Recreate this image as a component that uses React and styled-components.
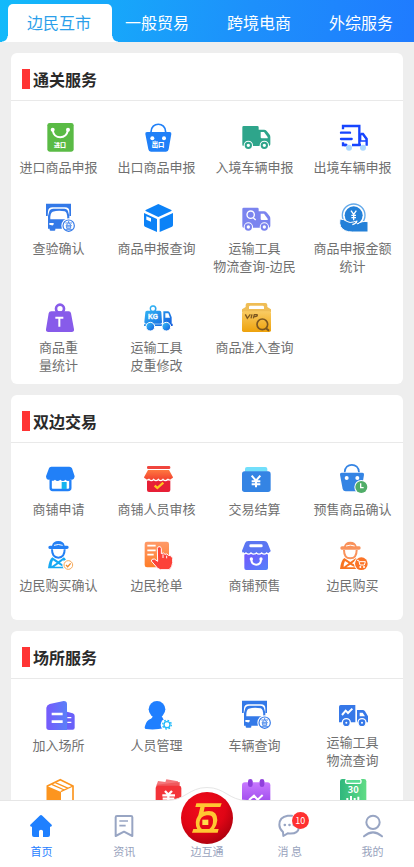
import React from 'react';
import styled, { createGlobalStyle } from 'styled-components';

const GlobalStyle = createGlobalStyle`
  * { box-sizing: border-box; }
  body {
    margin: 0;
    background: #eeeeee;
    font-family: "Noto Sans CJK SC", "Noto Sans", sans-serif;
  }
  button { font-family: inherit; border: 0; padding: 0; margin: 0; background: none; cursor: pointer; }
`;

const Screen = styled.div`
  display: flex;
  flex-direction: column;
  height: 100vh;
  overflow: hidden;
`;

const Tabs = styled.header`
  display: flex;
  flex: none;
  height: 42px;
  padding: 4px 0 0 8px;
  background: linear-gradient(100deg, #12bafa 0%, #1d90fb 60%, #1f7bff 100%);
`;

const TabRest = styled.div`
  display: flex;
  flex: 1;
  justify-content: space-between;
  padding: 0 21px 0 13px;
`;

const Tab = styled.button`
  padding-bottom: 2px;
  font-size: 16px;
  line-height: 36px;
  color: #fff;
  white-space: nowrap;
`;

const ActiveTab = styled(Tab)`
  position: relative;
  width: 104px;
  padding-right: 2px;
  color: #2b9fea;
  background: #fff;
  border-radius: 5px 5px 0 0;
  &::before, &::after {
    content: "";
    position: absolute;
    bottom: 0;
    width: 6px;
    height: 6px;
  }
  &::before { right: 100%; background: radial-gradient(circle at 0 0, transparent 5px, #fff 6px); }
  &::after { left: 100%; background: radial-gradient(circle at 100% 0, transparent 5px, #fff 6px); }
`;

const Main = styled.main`
  display: flex;
  flex: 1;
  flex-direction: column;
  gap: 11px;
  min-height: 0;
  padding: 11px 11px 0;
  overflow-y: auto;
  scrollbar-width: none;
`;

const Card = styled.section`
  flex: none;
  background: #fff;
  border-radius: 6px;
`;

const CardHead = styled.div`
  display: flex;
  align-items: center;
  gap: 3px;
  height: 48px;
  padding: 4px 11px 0;
  border-bottom: 1px solid #e9e9e9;
`;

const Mark = styled.span`
  width: 8px;
  height: 20px;
  background: #ff3434;
`;

const Title = styled.h2`
  margin: 0;
  font-size: 16px;
  line-height: 24px;
  font-weight: 700;
  color: #2a2a2a;
`;

const Grid = styled.div`
  display: grid;
  grid-template-columns: repeat(4, 1fr);
  row-gap: ${(p) => p.$gap}px;
  padding: 22px 0 ${(p) => p.$bottom}px;
`;

const Item = styled.button`
  display: flex;
  flex-direction: column;
  align-items: center;
  justify-content: flex-start;
  gap: ${(p) => (p.$tight ? 2 : 5)}px;
`;

const Glyph = styled.svg`
  display: block;
  width: 30px;
  height: 30px;
  overflow: visible;
`;

const Label = styled.span`
  padding-right: 3px;
  font-size: 13px;
  line-height: 18px;
  color: #707070;
  white-space: pre;
  text-align: center;
`;

const Nav = styled.nav`
  position: relative;
  display: grid;
  flex: none;
  grid-template-columns: repeat(5, 1fr);
  height: 67px;
  background: #fff;
  border-top: 1px solid #e6e6e6;
`;

const Hump = styled.svg`
  position: absolute;
  left: 50%;
  top: -15px;
  width: 80px;
  height: 16px;
  margin-left: -40px;
`;

const NavItem = styled.button`
  position: relative;
  display: flex;
  flex-direction: column;
  align-items: center;
  justify-content: flex-end;
  gap: 4px;
  padding-bottom: 8px;
  font-size: 11px;
  line-height: 16px;
  color: ${(p) => (p.$active ? '#1f80ff' : '#98a3bd')};
`;

const NavIcon = styled.svg`
  display: block;
  width: 26px;
  height: 26px;
`;

const Emblem = styled.svg`
  position: absolute;
  left: 50%;
  top: -9px;
  width: 52px;
  height: 52px;
  margin-left: -26px;
`;

const Badge = styled.span`
  position: absolute;
  left: 50%;
  top: 11px;
  width: 17px;
  height: 17px;
  margin-left: 2px;
  border-radius: 50%;
  background: #ff3030;
  color: #fff;
  font-size: 9px;
  line-height: 17px;
  text-align: center;
`;

const Bus = () => (
  <g>
    <path d="M3 -1H78V36H73V22Q73 10 60 10H23Q10 10 9 22L8 36H3Z" fill="#3379e8" />
    <path d="M9 68V36L13 22Q15 14 25 14H58Q67 14 69 22L73 36V74H31V77Q31 80 28 80H17Q14 80 14 77V74H9Z" fill="#3379e8" />
    <path d="M16 46Q15 27 23 23Q40 18 59 22Q67 24 67 46Z" fill="#fff" />
    <path d="M13 57H26V61Q25 65 20 64L13 62Z" fill="#fff" />
    <circle cx="71" cy="65" r="22" fill="#fff" />
    <circle cx="71" cy="65" r="17" fill="#fff" stroke="#3379e8" strokeWidth="3.5" />
    <path d="M61 57H81M71 51V57M70 58L62 65M72 58L80 65M65 64H77V73H65ZM65 68.5H77M61 77H81" fill="none" stroke="#3379e8" strokeWidth="2.5" />
  </g>
);

const Truck = ({ color, y = 0 }) => (
  <g transform={`translate(0 ${y})`}>
    <path d="M8 9H49Q53 9 53 13V20H70Q75 20 79 26L86 35Q88 38 88 42V64Q88 69 83 69H8Q4 69 4 65V13Q4 9 8 9Z" fill={color} />
    <path d="M59 27H69L80 42V46H62Q59 46 59 43Z" fill="#fff" />
    <circle cx="22" cy="67" r="14" fill="#fff" /><circle cx="70" cy="67" r="14" fill="#fff" />
    <circle cx="22" cy="67" r="8" fill="none" stroke={color} strokeWidth="6" />
    <circle cx="70" cy="67" r="8" fill="none" stroke={color} strokeWidth="6" />
  </g>
);

const Farmer = ({ a, b }) => (
  <g>
    <path d="M21 14Q24 0 40 0Q56 0 59 14H67Q71 14 71 19Q71 24 66 24H14Q10 24 10 19Q10 14 15 14Z" fill={a} />
    <path d="M27 13Q40 8 53 13" fill="none" stroke="#fff" strokeWidth="3" />
    <path d="M21 25Q21 50 40 50Q59 50 59 25" fill="none" stroke={a} strokeWidth="6" />
    <path d="M22 49Q12 56 9 82H64Q70 59 57 49L40 61ZM24 58L35 65L20 76Q20 65 24 58ZM40 69L54 77H28ZM55 57L61 74L45 65Z" fill={b} fillRule="evenodd" />
  </g>
);

const icons = {
  importBag: (
    <g>
      <rect x="7" y="0" width="79" height="86" rx="7" fill="#5abb45" />
      <path d="M23 22Q27 43 46 43Q64 43 69 22" fill="none" stroke="#fff" strokeWidth="6" />
      <circle cx="23" cy="20" r="6" fill="#fff" /><circle cx="69" cy="20" r="6" fill="#fff" />
      <text x="45" y="71" fontSize="18" fontWeight="900" fill="#fff" textAnchor="middle">进口</text>
    </g>
  ),
  exportBag: (
    <g fill="#2080f8">
      <path d="M24 27C24 -4 68 -4 68 27" fill="none" stroke="#2080f8" strokeWidth="5" />
      <path d="M12 27H80Q86 27 85 33L77 79Q76 86 69 86H24Q17 86 16 79L7 33Q6 27 12 27Z" />
      <circle cx="28" cy="46" r="6" fill="#fff" /><circle cx="63" cy="46" r="6" fill="#fff" />
      <text x="45" y="71" fontSize="19" fontWeight="900" fill="#fff" textAnchor="middle">出口</text>
    </g>
  ),
  truckIn: <Truck color="#2ea58b" />,
  truckOut: (
    <g fill="none" stroke="#1745ff" strokeWidth="7">
      <path d="M12 19V9H61V66H39M12 58V66H22M61 66H66M65 33H72L83 48V68" />
      <path d="M6 29H33M6 48H38M16 66H22" strokeLinecap="round" />
      <path d="M65 34H72L82 48V54H65Z" strokeWidth="4" />
      <circle cx="30" cy="74" r="9" fill="#acd8ff" stroke="none" /><circle cx="72" cy="74" r="9" fill="#acd8ff" stroke="none" />
    </g>
  ),
  bus: <Bus />,
  cube: (
    <g fill="#0c82f7">
      <path d="M46 0L85 18Q87 20 85 21L46 39L8 21Q6 20 8 18Z" />
      <path d="M3 27L42 45V84L6 68Q3 67 3 63ZM90 27L50 45V84L87 68Q90 67 90 63Z" />
      <path d="M10 37L24 43V53L10 47Z" fill="#fff" />
    </g>
  ),
  truckSearch: (
    <g>
      <Truck color="#7b84ef" y={2} />
      <circle cx="29" cy="32" r="11" fill="none" stroke="#fff" strokeWidth="4" />
      <path d="M37 41L44 48" stroke="#fff" strokeWidth="4" />
    </g>
  ),
  coinHand: (
    <g fill="#2380d8">
      <circle cx="44" cy="34" r="34" fill="none" stroke="#64aaea" strokeWidth="4" />
      <circle cx="44" cy="34" r="27" />
      <path d="M36 20L44 31L52 20M44 31V49M37 34H51M37 41H51" fill="none" stroke="#fff" strokeWidth="4" />
      <path d="M3 45Q14 45 23 52Q34 58 43 54L49 52L56 60Q67 50 87 53V84H40Q14 84 5 68Q0 58 3 45Z" stroke="#fff" strokeWidth="3" />
      <path d="M40 62Q52 58 54 50" fill="none" stroke="#fff" strokeWidth="4" />
    </g>
  ),
  weight: (
    <g fill="#875bea">
      <circle cx="45" cy="17" r="12" fill="none" stroke="#875bea" strokeWidth="8" />
      <path d="M19 25H71Q77 25 78 31L87 79Q88 87 80 87H10Q2 87 3 79L11 31Q12 25 19 25Z" />
      <path d="M31 44H55M43 44V71" stroke="#fff" strokeWidth="6" fill="none" />
    </g>
  ),
  truckKg: (
    <g>
      <linearGradient id="kg" x2="1" y2="1"><stop stopColor="#38c3f8" /><stop offset="1" stopColor="#1059dc" /></linearGradient>
      <g fill="url(#kg)">
        <path d="M22 23C11 1 49 1 39 23H50Q55 23 55 28L57 58Q57 62 53 62H9Q4 62 4 57L7 28Q7 23 12 23ZM30 11A6 6 0 1 0 30 23A6 6 0 1 0 30 11ZM61 25H75Q79 25 81 30L86 43V62H89V69H3V64H61ZM67 31V44H81L76 31Z" fillRule="evenodd" />
        <circle cx="22" cy="71" r="13" stroke="#fff" strokeWidth="3" /><circle cx="70" cy="71" r="13" stroke="#fff" strokeWidth="3" />
      </g>
      <text x="30" y="48" fontSize="20" fontWeight="900" fill="#fff" stroke="#fff" textAnchor="middle" fontFamily="Liberation Sans">KG</text>
    </g>
  ),
  vip: (
    <g>
      <linearGradient id="vip" x2="0" y2="1"><stop stopColor="#f9cb63" /><stop offset="1" stopColor="#eea20c" /></linearGradient>
      <path d="M20 0H73Q79 0 79 6V12L90 19V27H3V19L14 12V6Q14 0 20 0ZM28 8Q24 8 24 12V18H69V12Q69 8 65 8Z" fill="#efbd55" fillRule="evenodd" />
      <rect x="3" y="25" width="87" height="62" rx="5" fill="url(#vip)" />
      <path d="M13 34L19 46L28 34M33 34L30 46M37 46L40 35H48Q51 40 42 41H39" fill="none" stroke="#7c5620" strokeWidth="4" />
      <circle cx="64" cy="64" r="16" fill="none" stroke="#7c5620" strokeWidth="5" />
      <path d="M75 76L84 83" stroke="#7c5620" strokeWidth="6" />
    </g>
  ),
  shop: (
    <g>
      <path d="M17 44V69Q17 75 23 75H69Q76 75 76 69V44" fill="#fff" stroke="#2180f8" strokeWidth="7" />
      <rect x="50" y="51" width="15" height="21" fill="#15b4ee" />
      <path d="M19 5H73Q79 5 81 10L89 34Q87 47 76 44Q70 52 61 44Q54 52 46 44Q37 52 30 44Q21 51 15 44Q4 47 3 34L12 10Q13 5 19 5Z" fill="#2180f8" />
    </g>
  ),
  shopCheck: (
    <g>
      <linearGradient id="rs" x2="0" y2="1"><stop stopColor="#ff7840" /><stop offset="1" stopColor="#f03b2d" /></linearGradient>
      <path d="M12 43H82V75Q82 81 76 81H18Q12 81 12 75Z" fill="#e71f36" />
      <rect x="12" y="3" width="70" height="9" rx="4" fill="#f0453d" />
      <path d="M15 15H78L90 37Q86 51 75 44Q67 52 60 44Q53 52 46 44Q39 52 31 44Q25 51 17 44Q6 50 3 37Z" fill="url(#rs)" />
      <path d="M4 40Q10 49 18 43Q25 51 32 43Q39 51 46 43Q53 51 60 43Q67 51 75 43Q83 49 89 40" fill="none" stroke="#fff" strokeWidth="4" />
      <path d="M35 62L43 69L61 53" fill="none" stroke="#ffc51f" strokeWidth="7" />
    </g>
  ),
  pay: (
    <g>
      <path d="M12 20V12Q12 6 18 6H73Q79 6 79 12V20Z" fill="#72dffb" />
      <rect x="3" y="19" width="86" height="62" rx="8" fill="#3484e4" />
      <path d="M32 32L45 47L58 32M45 47V67M32 49H58M32 58H58" fill="none" stroke="#fff" strokeWidth="6" />
    </g>
  ),
  bagClock: (
    <g>
      <path d="M17 22C17 -8 60 -8 60 22" fill="none" stroke="#3484e4" strokeWidth="5" />
      <path d="M8 23H70Q76 23 75 29L68 72Q66 79 59 79H20Q13 79 11 72L3 29Q2 23 8 23Z" fill="#3484e4" />
      <circle cx="23" cy="39" r="6" fill="#fff" /><circle cx="55" cy="39" r="6" fill="#fff" />
      <circle cx="67" cy="66" r="21" fill="#fff" /><circle cx="67" cy="66" r="18" fill="#50ad68" />
      <path d="M65 55V68H74" fill="none" stroke="#fff" strokeWidth="4" />
    </g>
  ),
  farmerCheck: (
    <g>
      <Farmer a="#2380f5" b="#15a8f3" />
      <circle cx="70" cy="72" r="18" fill="#fff" /><circle cx="70" cy="72" r="13" fill="none" stroke="#f6aa5b" strokeWidth="3" />
      <path d="M63 72L68 77L77 67" fill="none" stroke="#f28a2a" strokeWidth="4" />
    </g>
  ),
  grab: (
    <g>
      <linearGradient id="gr" x2="0" y2="1"><stop stopColor="#ff9a69" /><stop offset="1" stopColor="#ff7d27" /></linearGradient>
      <rect x="5" y="2" width="73" height="77" rx="7" fill="url(#gr)" />
      <path d="M13 14H38M13 28H38M13 41H32" stroke="#fff" strokeWidth="5" />
      <path d="M43 23Q44 15 51 17Q55 19 55 23V38Q62 33 66 40Q72 36 76 43Q87 42 89 52V65Q88 79 78 86H52Q43 84 38 75L25 60Q25 53 34 54L44 61Z" fill="#fc4138" stroke="#fff" strokeWidth="3" />
      <path d="M60 40V51M71 44V52" stroke="#fff" strokeWidth="3" />
    </g>
  ),
  presale: (
    <g>
      <linearGradient id="ps" x2="1" y2="1"><stop stopColor="#7357fd" /><stop offset="1" stopColor="#5383fa" /></linearGradient>
      <path d="M10 38H81V81Q81 87 75 87H16Q10 87 10 81Z" fill="url(#ps)" />
      <path d="M22 0H69Q77 0 80 7L89 29Q87 40 77 37Q70 43 62 37Q54 43 46 37Q38 43 30 37Q22 43 14 37Q4 40 3 29L12 7Q14 0 22 0Z" fill="#5b76f2" />
      <path d="M5 34Q10 42 15 36Q23 43 30 36Q38 43 46 36Q54 43 62 36Q70 43 77 36Q82 42 87 34" fill="none" stroke="#fff" strokeWidth="4" />
      <rect x="25" y="10" width="40" height="9" rx="4" fill="#fff" />
      <path d="M31 55Q31 71 46 71Q60 71 60 55" fill="none" stroke="#fff" strokeWidth="6" strokeLinecap="round" />
      <circle cx="31" cy="54" r="5" fill="#fff" /><circle cx="60" cy="54" r="5" fill="#fff" />
    </g>
  ),
  farmerCart: (
    <g>
      <g transform="translate(-6 2)"><Farmer a="#f9925b" b="#f97420" /></g>
      <circle cx="67" cy="68" r="22" fill="#fff" /><circle cx="67" cy="68" r="19" fill="#fb7427" />
      <path d="M54 58H59L63 72H76L79 62H61" fill="none" stroke="#fff" strokeWidth="3" />
      <circle cx="64" cy="78" r="3" fill="#fff" /><circle cx="75" cy="78" r="3" fill="#fff" />
    </g>
  ),
  place: (
    <g>
      <linearGradient id="pl" x2="1" y2="0"><stop stopColor="#765afc" /><stop offset="1" stopColor="#5a80f8" /></linearGradient>
      <path d="M60 31L83 37Q89 39 89 45V80Q89 86 83 86H60Z" fill="#6960f9" />
      <path d="M14 9L56 0Q66 0 66 9V87H12Q4 87 4 79V20Q5 12 14 9Z" fill="url(#pl)" />
      <path d="M20 39H53M20 62H53" stroke="#fff" strokeWidth="8" />
      <path d="M67 50H79M67 64H79" stroke="#fff" strokeWidth="4" />
    </g>
  ),
  person: (
    <g fill="#1f7fff">
      <circle cx="42" cy="25" r="25" />
      <path d="M29 45H56Q59 54 66 57V81Q35 88 9 84Q3 83 6 75Q10 57 24 53Q28 51 29 45Z" />
      <circle cx="72" cy="71" r="19" fill="#fff" />
      <circle cx="72" cy="71" r="13" fill="none" stroke="#20bafa" strokeWidth="4" strokeDasharray="5 5.2" />
      <circle cx="72" cy="71" r="9" fill="#fff" stroke="#20bafa" strokeWidth="4" />
    </g>
  ),
  truckChart: (
    <g fill="#3678e8">
      <path d="M5 12H49V64H0V17Q0 12 5 12ZM54 27H71Q75 27 78 31L87 46V64H54ZM62 35V46H78L71 35Z" fillRule="evenodd" />
      <path d="M9 42L20 29L27 36L40 23" fill="none" stroke="#fff" strokeWidth="6" />
      <circle cx="22" cy="65" r="12" stroke="#fff" strokeWidth="4" /><circle cx="69" cy="65" r="12" stroke="#fff" strokeWidth="4" />
      <circle cx="22" cy="65" r="3" fill="#fff" /><circle cx="69" cy="65" r="3" fill="#fff" />
    </g>
  ),
  parcel: (
    <g>
      <path d="M46 2L84 21V75L46 90L7 75V21Z" fill="#fff" stroke="#fc951f" strokeWidth="5" />
      <path d="M6 21L48 39V90L7 75Z" fill="#fc951f" /><path d="M47 38L84 21M20 16L58 33M31 11L70 28" stroke="#fc951f" strokeWidth="4" />
    </g>
  ),
  redBook: (
    <g>
      <path d="M40 20L45 6L67 9L70 1L105 7V22Z" fill="#f4777b" /><path d="M41 17L110 9V25H41Z" fill="#ef595d" />
      <rect x="38" y="20" width="77" height="67" rx="7" fill="#f33339" />
      <path d="M66 36L76 47L87 36M76 47V72M58 49H96M59 59H94" fill="none" stroke="#fff" strokeWidth="7" />
    </g>
  ),
  calendar: (
    <g>
      <linearGradient id="ca" x2="0" y2="1"><stop stopColor="#c879ff" /><stop offset="1" stopColor="#933ee7" /></linearGradient>
      <rect x="3" y="10" width="85" height="78" rx="9" fill="url(#ca)" />
      <rect x="21" y="0" width="14" height="24" rx="7" fill="#9040dd" /><rect x="56" y="0" width="14" height="24" rx="7" fill="#9040dd" />
      <path d="M24 63L39 50L50 62L65 48" fill="none" stroke="#fff" strokeWidth="6" />
    </g>
  ),
  report: (
    <g>
      <linearGradient id="re" x2="1" y2="0"><stop stopColor="#2fb77d" /><stop offset="1" stopColor="#60dc85" /></linearGradient>
      <rect x="3" y="0" width="79" height="88" rx="7" fill="url(#re)" />
      <rect x="20" y="1" width="46" height="12" rx="4" fill="#5bdc94" stroke="#fff" strokeWidth="4" />
      <text x="43" y="43" fontSize="28" fontWeight="700" fill="#fff" textAnchor="middle">30</text>
      <path d="M25 57V80M36 51V80M47 57V80M58 53V80" stroke="#fff" strokeWidth="6" />
    </g>
  ),
};

const sections = [
  { title: '通关服务', gap: 28, bottom: 10, items: [
    ['importBag', '进口商品申报'], ['exportBag', '出口商品申报'], ['truckIn', '入境车辆申报'], ['truckOut', '出境车辆申报'],
    ['bus', '查验确认'], ['cube', '商品申报查询'], ['truckSearch', '运输工具\n物流查询-边民'], ['coinHand', '商品申报金额\n统计'],
    ['weight', '商品重\n量统计'], ['truckKg', '运输工具\n皮重修改'], ['vip', '商品准入查询'],
  ] },
  { title: '双边交易', gap: 23, bottom: 26, items: [
    ['shop', '商铺申请'], ['shopCheck', '商铺人员审核'], ['pay', '交易结算'], ['bagClock', '预售商品确认'],
    ['farmerCheck', '边民购买确认'], ['grab', '边民抢单'], ['presale', '商铺预售'], ['farmerCart', '边民购买'],
  ] },
  { title: '场所服务', gap: 10, bottom: 10, items: [
    ['place', '加入场所'], ['person', '人员管理'], ['bus', '车辆查询'], ['truckChart', '运输工具\n物流查询', true],
    ['parcel'], ['redBook'], ['calendar'], ['report'],
  ] },
];

const Section = ({ title, gap, bottom, items }) => (
  <Card>
    <CardHead><Mark /><Title>{title}</Title></CardHead>
    <Grid $gap={gap} $bottom={bottom}>
      {items.map(([icon, label, tight]) => (
        <Item key={icon} type="button" $tight={tight}>
          <Glyph viewBox="0 0 90 90" aria-hidden="true">{icons[icon]}</Glyph>
          {label && <Label>{label}</Label>}
        </Item>
      ))}
    </Grid>
  </Card>
);

export default function App() {
  return (
    <Screen>
      <GlobalStyle />
      <Tabs>
        <ActiveTab type="button">边民互市</ActiveTab>
        <TabRest>
          <Tab type="button">一般贸易</Tab>
          <Tab type="button">跨境电商</Tab>
          <Tab type="button">外综服务</Tab>
        </TabRest>
      </Tabs>
      <Main>
        {sections.map((s) => <Section key={s.title} {...s} />)}
      </Main>
      <Nav>
        <Hump viewBox="0 0 80 16" aria-hidden="true">
          <path d="M0 14.5C18 14.5 22 1.5 40 1.5S62 14.5 80 14.5V16H0Z" fill="#fff" />
          <path d="M0 14.5C18 14.5 22 1.5 40 1.5S62 14.5 80 14.5" fill="none" stroke="#e6e6e6" />
        </Hump>
        <NavItem type="button" $active>
          <NavIcon viewBox="0 0 78 78">
            <path d="M35 8Q39 4 43 8L71 35Q74 40 68 41H66V66Q66 72 60 72H45V55Q45 50 39 50T33 55V72H18Q12 72 12 66V41H10Q4 40 7 35Z" fill="#1f80ff" />
          </NavIcon>
          首页
        </NavItem>
        <NavItem type="button">
          <NavIcon viewBox="0 0 78 78" fill="none" stroke="#98a5c3" strokeWidth="6" strokeLinejoin="round">
            <path d="M18 9H60Q64 9 64 13V69L39 56L14 69V13Q14 9 18 9Z" /><path d="M25 24H51M25 38H44" strokeWidth="5" />
          </NavIcon>
          资讯
        </NavItem>
        <NavItem type="button">
          <Emblem viewBox="0 0 156 156" aria-hidden="true">
            <radialGradient id="em" cx=".4" cy=".3" r=".75"><stop stopColor="#f00c1c" /><stop offset=".6" stopColor="#e00515" /><stop offset="1" stopColor="#a9000d" /></radialGradient>
            <circle cx="78" cy="78" r="78" fill="url(#em)" />
            <path d="M46 34H122L118 45H71L68 59Q109 49 109 85Q108 99 99 111H113L110 122H33L37 111H85Q97 102 96 83Q95 67 77 70Q59 73 56 89Q53 104 64 112H49Q38 91 52 70L58 45H43Z" fill="#ffc832" />
            <rect x="64" y="83" width="18" height="16" fill="#ffdc4c" />
          </Emblem>
          边互通
        </NavItem>
        <NavItem type="button">
          <NavIcon viewBox="0 0 78 78" fill="none" stroke="#98a5c3" strokeWidth="6" strokeLinecap="round" strokeLinejoin="round">
            <path d="M45 8H32Q7 12 7 35Q7 47 18 57L19 69L32 61Q63 65 66 43" />
            <path d="M23 36H24M37 36H38M50 36H51" strokeWidth="7" />
          </NavIcon>
          <Badge>10</Badge>
          消 息
        </NavItem>
        <NavItem type="button">
          <NavIcon viewBox="0 0 78 78" fill="none" stroke="#98a5c3" strokeWidth="6" strokeLinecap="round">
            <circle cx="39" cy="28" r="20" /><path d="M12 70Q39 46 66 70" />
          </NavIcon>
          我的
        </NavItem>
      </Nav>
    </Screen>
  );
}
